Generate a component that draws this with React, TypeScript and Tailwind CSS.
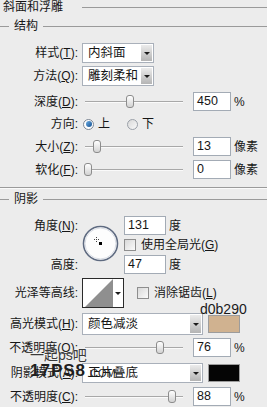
import React from "react";

function Label({ children }: { children: React.ReactNode }) {
  return <div className="w-[78px] shrink-0 text-right">{children}</div>;
}

function Arrow() {
  return <span className="border-x-[3px] border-t-[3px] border-x-transparent border-t-[#1a1a1a]" />;
}

function Select({ value, width }: { value: string; width: string }) {
  return (
    <div className={`ml-[4px] flex h-full items-stretch border border-[#a9b0ba] bg-white ${width}`}>
      <span className="flex flex-1 items-center pl-[5px] text-[12.5px]">{value}</span>
      <span className="my-[1px] mr-[1px] flex w-[11px] items-center justify-center bg-gradient-to-b from-[#ececec] to-[#b4b4b4]">
        <Arrow />
      </span>
    </div>
  );
}

function Slider({ thumb }: { thumb: number }) {
  // thumb = x of the handle's centre in page pixels, track runs 85..183
  return (
    <div className="relative ml-[7px] h-[13px] w-[98px]">
      <div className="absolute left-0 right-0 top-[6px] border-t border-[#a8a8a8]" />
      <div className="absolute left-0 right-0 top-[7px] border-t border-[#fafafa]" />
      <div
        className="absolute top-0 h-[13px] w-[8px] rounded-[3px] border border-[#8c8c8c] bg-gradient-to-b from-[#ffffff] to-[#d2d2d2]"
        style={{ left: thumb - 85 - 4 }}
      />
    </div>
  );
}

function Field({ value, width = "w-[38px]" }: { value: string; width?: string }) {
  return (
    <div className={`flex h-full items-center border border-[#a3abb5] bg-white pl-[3px] text-[12.5px] ${width}`}>
      {value}
    </div>
  );
}

function Check({ label }: { label: React.ReactNode }) {
  return (
    <div className="flex items-center">
      <span className="h-[12px] w-[12px] border border-[#8e8e8e] bg-gradient-to-br from-[#d9d9d9] to-[#fbfbfb]" />
      <span className="ml-[5px]">{label}</span>
    </div>
  );
}

function SliderRow({ label, thumb, value, unit }: { label: React.ReactNode; thumb: number; value: string; unit: string }) {
  return (
    <div className="flex h-[19px] items-center">
      <Label>{label}</Label>
      <Slider thumb={thumb} />
      <div className="ml-[10px] h-full">
        <Field value={value} />
      </div>
      <span className="ml-[3px]">{unit}</span>
    </div>
  );
}

function AngleDial() {
  return (
    <svg width="37" height="37" viewBox="0 0 37 37">
      <circle cx="18.5" cy="18.5" r="17" fill="#fdfdfd" stroke="#5e6a80" strokeWidth="1.6" />
      <circle cx="18.5" cy="18.5" r="15.5" fill="none" stroke="#d8dce4" strokeWidth="1" />
      <path d="M14.5 12v5M12 14.5h5" stroke="#444" strokeWidth="1" strokeDasharray="1 1" />
      <rect x="17" y="17" width="3" height="3" fill="#000" />
    </svg>
  );
}

function GroupHead({ title }: { title: string }) {
  return (
    <div className="flex h-[14px] items-center">
      <div className="w-[9px] border-t border-[#9a9a9a]" />
      <span className="ml-[5px]">{title}</span>
      <div className="ml-[5px] flex-1 border-t border-[#9a9a9a]" />
    </div>
  );
}

export default function App() {
  return (
    <div className="relative flex h-[407px] w-[267px] flex-col overflow-hidden bg-[#ececec] text-[12px] leading-none text-[#161616] [font-family:'Liberation_Sans','Noto_Sans_CJK_SC',sans-serif]">
      <div className="flex h-[14px] items-center">
        <span className="w-[82px] pl-[3px]">斜面和浮雕</span>
        <div className="flex-1 border-t border-[#9a9a9a]" />
      </div>

      <div className="mt-[5px]">
        <GroupHead title="结构" />
      </div>

      <div className="mt-[10px] flex h-[20px] items-center">
        <Label>样式(<u>T</u>):</Label>
        <Select value="内斜面" width="w-[72px]" />
      </div>
      <div className="mt-[3px] flex h-[20px] items-center">
        <Label>方法(<u>Q</u>):</Label>
        <Select value="雕刻柔和" width="w-[72px]" />
      </div>

      <div className="mt-[6px]">
        <SliderRow label={<>深度(<u>D</u>):</>} thumb={130} value="450" unit="%" />
      </div>

      <div className="mt-[6px] flex h-[14px] items-center">
        <Label>方向:</Label>
        <span className="ml-[5px] h-[11px] w-[11px] rounded-full border border-[#7d8794] bg-white p-[1.5px]">
          <span className="block h-full w-full rounded-full bg-gradient-to-br from-[#6fb0e6] to-[#0f4f8f]" />
        </span>
        <span className="ml-[4px]">上</span>
        <span className="ml-[17px] h-[11px] w-[11px] rounded-full border border-[#9aa0a8] bg-gradient-to-br from-[#d8d8d8] to-[#fafafa]" />
        <span className="ml-[4px]">下</span>
      </div>

      <div className="mt-[6px]">
        <SliderRow label={<>大小(<u>Z</u>):</>} thumb={97} value="13" unit="像素" />
      </div>
      <div className="mt-[4px]">
        <SliderRow label={<>软化(<u>F</u>):</>} thumb={88} value="0" unit="像素" />
      </div>

      <div className="mt-[8px] border-t border-[#9a9a9a]" />
      <div className="border-t border-[#fafafa]" />

      <div className="mt-[3px]">
        <GroupHead title="阴影" />
      </div>

      <div className="mt-[10px] grid h-[58px] grid-cols-[78px_46px_1fr] grid-rows-[19px_1fr_19px]">
        <div className="col-start-1 row-start-1 flex items-center justify-end">角度(<u>N</u>):</div>
        <div className="col-start-2 row-span-3 row-start-1 ml-[4px] self-center pb-[3px]">
          <AngleDial />
        </div>
        <div className="col-start-3 row-start-1 flex items-center">
          <div className="h-full">
            <Field value="131" width="w-[42px]" />
          </div>
          <span className="ml-[3px]">度</span>
        </div>
        <div className="col-start-3 row-start-2 flex items-center">
          <Check label={<>使用全局光(<u>G</u>)</>} />
        </div>
        <div className="col-start-1 row-start-3 flex items-center justify-end">高度:</div>
        <div className="col-start-3 row-start-3 flex items-center">
          <div className="h-full">
            <Field value="47" width="w-[42px]" />
          </div>
          <span className="ml-[3px]">度</span>
        </div>
      </div>

      <div className="mt-[4px] flex h-[30px] items-center">
        <Label>光泽等高线:</Label>
        <div className="ml-[4px] flex h-full w-[42px] border border-[#2a2a2a] bg-white">
          <svg width="29" height="28" viewBox="0 0 29 28" className="ml-[1px]">
            <polygon points="1,28 29,0 29,28" fill="#8f8f8f" />
          </svg>
          <span className="flex flex-1 items-center justify-center">
            <Arrow />
          </span>
        </div>
        <div className="ml-[13px]">
          <Check label={<>消除锯齿(<u>L</u>)</>} />
        </div>
      </div>

      <div className="mt-[5px] flex h-[22px] items-center">
        <Label>高光模式(<u>H</u>):</Label>
        <Select value="颜色减淡" width="w-[121px]" />
        <span className="ml-[5px] h-[18px] w-[32px] border border-[#9c9c9c] bg-[#d0b290]" />
      </div>

      <div className="mt-[3px]">
        <SliderRow label={<>不透明度(<u>O</u>):</>} thumb={160} value="76" unit="%" />
      </div>

      <div className="mt-[6px] flex h-[20px] items-center">
        <Label>阴影模式(<u>A</u>):</Label>
        <Select value="正片叠底" width="w-[121px]" />
        <span className="ml-[5px] h-[18px] w-[32px] border border-[#9c9c9c] bg-[#050505]" />
      </div>

      <div className="mt-[4px]">
        <SliderRow label={<>不透明度(<u>C</u>):</>} thumb={172} value="88" unit="%" />
      </div>

      <span className="absolute left-[200px] top-[302px] text-[14px] text-[#1a1a1a]">d0b290</span>

      <div className="absolute left-[30px] top-[348px] text-[14px] text-[#3a3a3a] [text-shadow:0_0_2px_#ffffff]">一起ps吧</div>
      <div className="absolute left-[30px] top-[362px] flex items-end text-[#1f1f1f]">
        <span className="text-[17px] font-bold tracking-[1px]">17PS8</span>
        <span className="ml-[1px] text-[11px]">.COM</span>
      </div>
    </div>
  );
}
